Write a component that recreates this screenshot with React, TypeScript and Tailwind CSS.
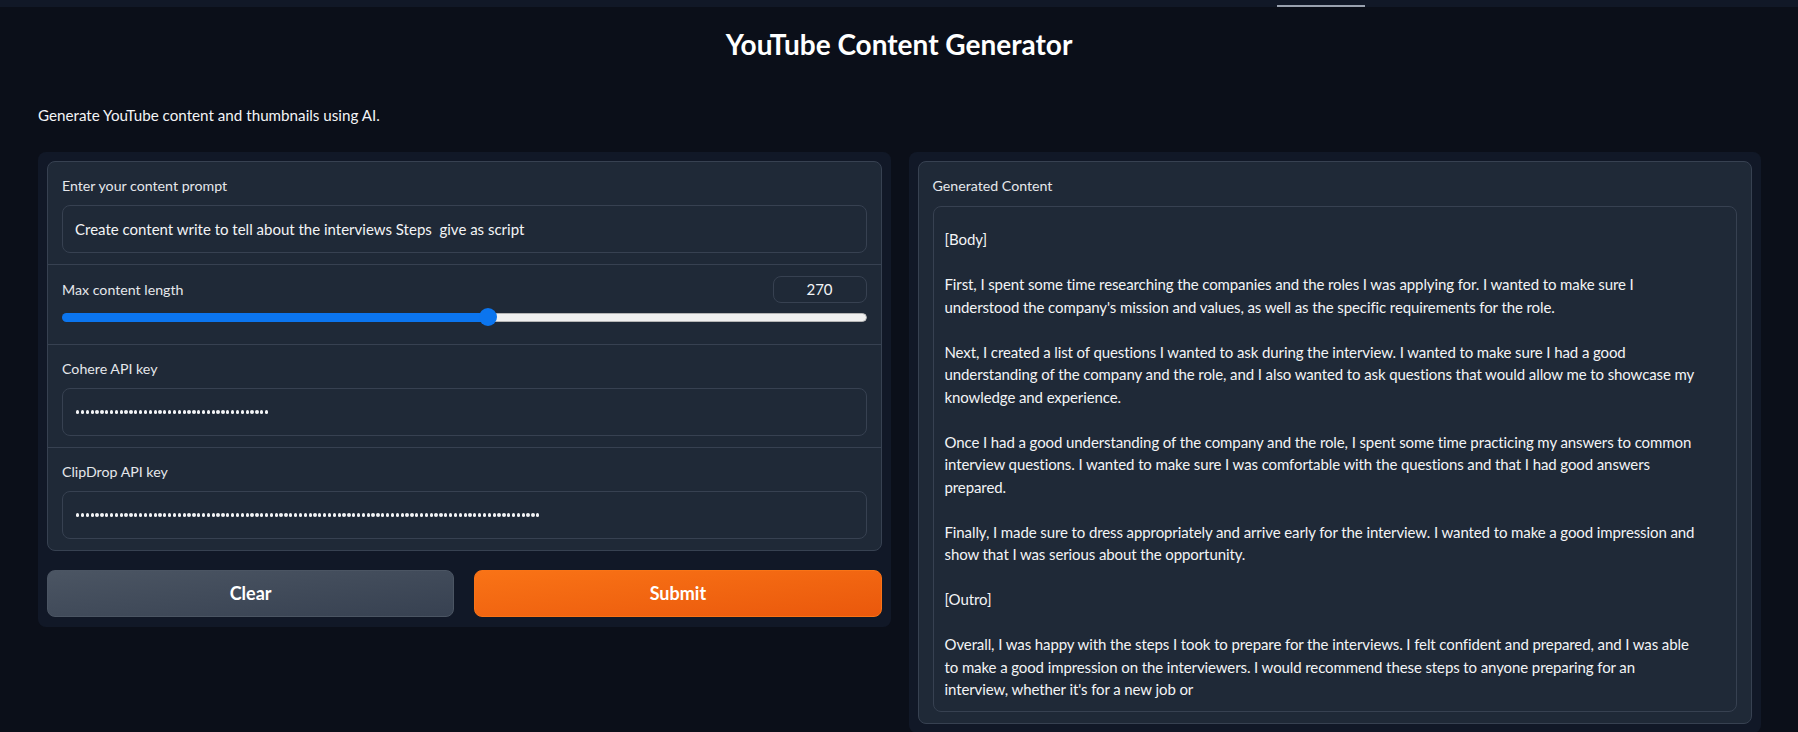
import React from "react";

const contentLines = [
  "[Body]",
  "",
  "First, I spent some time researching the companies and the roles I was applying for. I wanted to make sure I",
  "understood the company's mission and values, as well as the specific requirements for the role.",
  "",
  "Next, I created a list of questions I wanted to ask during the interview. I wanted to make sure I had a good",
  "understanding of the company and the role, and I also wanted to ask questions that would allow me to showcase my",
  "knowledge and experience.",
  "",
  "Once I had a good understanding of the company and the role, I spent some time practicing my answers to common",
  "interview questions. I wanted to make sure I was comfortable with the questions and that I had good answers",
  "prepared.",
  "",
  "Finally, I made sure to dress appropriately and arrive early for the interview. I wanted to make a good impression and",
  "show that I was serious about the opportunity.",
  "",
  "[Outro]",
  "",
  "Overall, I was happy with the steps I took to prepare for the interviews. I felt confident and prepared, and I was able",
  "to make a good impression on the interviewers. I would recommend these steps to anyone preparing for an",
  "interview, whether it's for a new job or",
];

const Label = ({ children }: { children: React.ReactNode }) => (
  <div className="text-[14.2px] leading-[20px] text-gray-200">{children}</div>
);

// masked key, drawn as the browser draws a password value
const PasswordBox = ({ count }: { count: number }) => (
  <div className="mt-[9px] h-[48px] rounded-lg border border-[#374151] bg-[#1f2937] pl-[13px] flex items-center">
    <div className="flex gap-[1.55px]">
      {Array.from({ length: count }).map((_, i) => (
        <span key={i} className="block h-[3.3px] w-[3.3px] rounded-full bg-gray-100" />
      ))}
    </div>
  </div>
);

const App: React.FC = () => {
  return (
    <div className="min-h-screen bg-[#0b0f19] font-['Lato',sans-serif] text-gray-100">
      {/* top strip */}
      <div className="h-[7px] bg-[#111827] pl-[1277px] pt-[5px]">
        <div className="h-[2px] w-[88px] bg-gray-400" />
      </div>

      <h1 className="pt-[20px] text-center text-[28px] leading-[34px] font-bold text-white">
        YouTube Content Generator
      </h1>

      <p className="mt-[42px] pl-[38px] text-[15.2px] leading-[24px] text-gray-100">
        Generate YouTube content and thumbnails using AI.
      </p>

      <div className="mt-[25px] flex gap-[18px] pl-[38px] pr-[37px]">
        {/* left column */}
        <div className="flex-1 self-start rounded-lg bg-[#111827] px-[9px] pt-[9px] pb-[10px]">
          <div className="rounded-lg border border-[#374151] bg-[#1f2937]">
            <div className="px-[14px] pt-[14px] pb-[11px] border-b border-[#374151]">
              <Label>Enter your content prompt</Label>
              <div className="mt-[9px] h-[48px] rounded-lg border border-[#374151] bg-[#1f2937] px-[12px] flex items-center text-[15px] text-gray-100">
                Create content write to tell about the interviews Steps&nbsp; give as script
              </div>
            </div>

            <div className="px-[14px] pt-[11px] pb-[18px] border-b border-[#374151]">
              <div className="flex items-center justify-between">
                <Label>Max content length</Label>
                <div className="h-[27px] w-[94px] rounded-lg border border-[#374151] flex items-center justify-center text-[15px] text-gray-100">
                  270
                </div>
              </div>
              <div className="relative mt-[5px] h-[18px] flex items-center">
                <div className="flex h-[9px] w-full overflow-hidden rounded-full">
                  <div className="h-full w-[53%] bg-[#0b75ef]" />
                  <div className="h-full flex-1 bg-[#efefef] border border-[#b5b5b5] rounded-r-full" />
                </div>
                <div className="absolute left-[calc(53%-9px)] top-0 h-[18px] w-[18px] rounded-full bg-[#0b75ef]" />
              </div>
            </div>

            <div className="px-[14px] pt-[14px] pb-[11px] border-b border-[#374151]">
              <Label>Cohere API key</Label>
              <PasswordBox count={40} />
            </div>

            <div className="px-[14px] pt-[14px] pb-[11px]">
              <Label>ClipDrop API key</Label>
              <PasswordBox count={96} />
            </div>
          </div>

          <div className="mt-[19px] flex gap-[20px]">
            <button className="flex-1 h-[47px] rounded-lg border border-[#4b5563] bg-gradient-to-br from-[#4b5563] to-[#374151] text-[18px] font-bold text-white">
              Clear
            </button>
            <button className="flex-1 h-[47px] rounded-lg border border-[#f97316] bg-gradient-to-br from-[#f97316] to-[#ea580c] text-[18px] font-bold text-white">
              Submit
            </button>
          </div>
        </div>

        {/* right column */}
        <div className="flex-1 rounded-lg bg-[#111827] p-[9px]">
          <div className="rounded-lg border border-[#374151] bg-[#1f2937] px-[14px] pt-[14px] pb-[11px]">
            <Label>Generated Content</Label>
            <div className="mt-[10px] rounded-lg border border-[#374151] bg-[#1f2937] px-[11px] pt-[21px] pb-[10px] text-[15px] leading-[22.5px] tracking-[-0.1px] text-gray-100">
              {contentLines.map((line, i) => (
                <div key={i} className="whitespace-nowrap h-[22.5px]">
                  {line}
                </div>
              ))}
            </div>
          </div>
        </div>
      </div>
    </div>
  );
};

export default App;
